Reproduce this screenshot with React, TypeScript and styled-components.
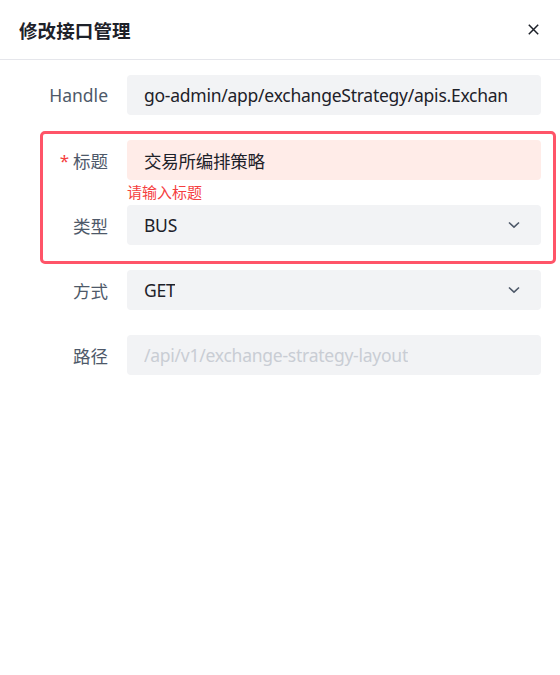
import React from "react";
import styled, { createGlobalStyle } from "styled-components";

const GlobalStyle = createGlobalStyle`
	html, body {
		margin: 0;
		padding: 0;
		background: #ffffff;
	}
	body {
		font-family: "Noto Sans", "Noto Sans CJK SC", sans-serif;
		color: #1d2129;
	}
	* {
		box-sizing: border-box;
	}
`;

const Drawer = styled.div`
	width: 560px;
	height: 675px;
	background: #ffffff;
	display: flex;
	flex-direction: column;
`;

const Header = styled.div`
	height: 60px;
	padding: 0 19px;
	display: flex;
	align-items: center;
	justify-content: space-between;
	border-bottom: 1px solid #e5e6eb;
`;

const Title = styled.div`
	font-size: 18.5px;
	font-weight: 700;
	color: #1d2129;
	letter-spacing: 0.1px;
`;

const CloseButton = styled.button`
	width: 24px;
	height: 24px;
	padding: 0;
	margin-right: -4px;
	border: none;
	background: transparent;
	display: flex;
	align-items: center;
	justify-content: center;
	cursor: pointer;
`;

const Body = styled.div`
	padding: 15px 19px 0;
`;

const Row = styled.div<{ $hasError?: boolean }>`
	display: grid;
	grid-template-columns: 89px 1fr;
	column-gap: 19px;
	margin-bottom: ${(p) => (p.$hasError ? "0" : "25px")};
`;

const Label = styled.label`
	height: 40px;
	display: flex;
	align-items: center;
	justify-content: flex-end;
	font-size: 17.5px;
	color: #4e5969;
`;

const Required = styled.span`
	color: #f53f3f;
	margin-right: 4px;
	font-size: 17px;
`;

const Field = styled.div<{ $error?: boolean; $placeholder?: boolean }>`
	height: 40px;
	border-radius: 4px;
	padding: 0 17px;
	display: flex;
	align-items: center;
	justify-content: space-between;
	background: ${(p) => (p.$error ? "#ffece8" : "#f2f3f5")};
	color: ${(p) => (p.$placeholder ? "#c9cdd4" : "#1d2129")};
	font-size: 17.5px;
	letter-spacing: -0.25px;
	white-space: nowrap;
	overflow: hidden;
`;

const FieldText = styled.span`
	min-width: 0;
	overflow: hidden;
`;

const ErrorText = styled.div`
	grid-column: 2;
	height: 25px;
	line-height: 24px;
	font-size: 15px;
	color: #f53f3f;
`;

const HighlightGroup = styled.div`
	position: relative;
	display: flow-root;

	&::before {
		content: "";
		position: absolute;
		top: -9px;
		left: 21px;
		right: -15px;
		bottom: 6px;
		border: 3px solid #ff5468;
		border-radius: 5px;
		pointer-events: none;
	}
`;

const CloseIcon = () => (
	<svg width="11" height="11" viewBox="0 0 11 11">
		<path d="M0.8 0.8 L10.2 10.2 M10.2 0.8 L0.8 10.2" stroke="#1d2129" strokeWidth="1.5" />
	</svg>
);

const Chevron = () => (
	<svg width="12" height="8" viewBox="0 0 12 8" style={{ marginRight: 4, flexShrink: 0 }}>
		<path d="M1 1.5 L6 6.2 L11 1.5" fill="none" stroke="#4e5969" strokeWidth="1.6" />
	</svg>
);

export default function App() {
	return (
		<>
			<GlobalStyle />
			<Drawer>
				<Header>
					<Title>修改接口管理</Title>
					<CloseButton aria-label="关闭">
						<CloseIcon />
					</CloseButton>
				</Header>
				<Body>
					<Row>
						<Label>Handle</Label>
						<Field>
							<FieldText>go-admin/app/exchangeStrategy/apis.Exchan</FieldText>
						</Field>
					</Row>
					<HighlightGroup>
						<Row $hasError>
							<Label>
								<Required>*</Required>标题
							</Label>
							<Field $error>
								<FieldText>交易所编排策略</FieldText>
							</Field>
							<ErrorText>请输入标题</ErrorText>
						</Row>
						<Row>
							<Label>类型</Label>
							<Field>
								<FieldText>BUS</FieldText>
								<Chevron />
							</Field>
						</Row>
					</HighlightGroup>
					<Row>
						<Label>方式</Label>
						<Field>
							<FieldText>GET</FieldText>
							<Chevron />
						</Field>
					</Row>
					<Row>
						<Label>路径</Label>
						<Field $placeholder>
							<FieldText>/api/v1/exchange-strategy-layout</FieldText>
						</Field>
					</Row>
				</Body>
			</Drawer>
		</>
	);
}
